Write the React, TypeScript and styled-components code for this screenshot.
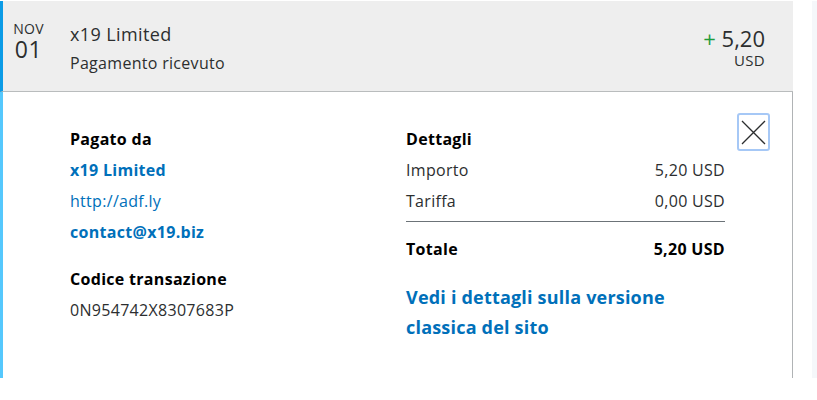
import React from "react";
import styled, { createGlobalStyle } from "styled-components";

const Global = createGlobalStyle`
  html, body { margin: 0; padding: 0; background: #ffffff; }
  body { font-family: "Open Sans", "Noto Sans", Arial, sans-serif; color: #2c2e2f; }
`;

const Page = styled.div`
  display: flex;
  width: 817px;
  padding-top: 1px;
`;

const Card = styled.div`
  width: 793px;
  flex: none;
  display: flex;
  flex-direction: column;
`;

const Strip = styled.div`
  margin-left: 19px;
  flex: 1;
  height: 377px;
  background: #f5f7fa;
`;

const Header = styled.div`
  height: 91px;
  box-sizing: border-box;
  background: #eeeeee;
  border-left: 3px solid #0b9be6;
  border-bottom: 1px solid #b9bcbd;
  display: flex;
  align-items: flex-start;
  padding: 19px 28px 0 0;
`;

const DateCol = styled.div`
  width: 51px;
  display: flex;
  flex-direction: column;
  align-items: center;
`;

const Month = styled.div`
  font-size: 14px;
  line-height: 18px;
  letter-spacing: 0.3px;
`;

const Day = styled.div`
  font-size: 23px;
  line-height: 24px;
  letter-spacing: 0.5px;
  margin-top: -1px;
`;

const Info = styled.div`
  margin-left: 16px;
  flex: 1;
  padding-top: 2px;
`;

const Title = styled.div`
  font-size: 18px;
  line-height: 24px;
  letter-spacing: 0.4px;
`;

const Sub = styled.div`
  font-size: 16px;
  line-height: 20px;
  letter-spacing: 0.3px;
  margin-top: 7px;
`;

const Amount = styled.div`
  text-align: right;
  padding-top: 5px;
`;

const Value = styled.div`
  font-size: 22px;
  line-height: 26px;
`;

const Plus = styled.span`
  color: #1f9c3b;
`;

const Currency = styled.div`
  font-size: 15px;
  line-height: 18px;
  letter-spacing: 0.3px;
`;

const Panel = styled.div`
  height: 286px;
  box-sizing: border-box;
  border-left: 3px solid #55c8fd;
  border-right: 1px solid #b0b3b5;
  display: flex;
  padding: 32px 22px 0 67px;
`;

const LeftCol = styled.div`
  width: 336px;
  flex: none;
`;

const RightCol = styled.div`
  width: 319px;
  flex: none;
`;

const Label = styled.div<{ $gap?: number }>`
  font-size: 16px;
  line-height: 31px;
  letter-spacing: 0.3px;
  font-weight: 700;
  color: #000000;
  margin-top: ${(p) => p.$gap ?? 0}px;
`;

const Link = styled.div<{ $bold?: boolean }>`
  font-size: 16px;
  line-height: 31px;
  letter-spacing: 0.3px;
  color: #0070ba;
  font-weight: ${(p) => (p.$bold ? 700 : 400)};
`;

const Plain = styled.div`
  font-size: 16px;
  line-height: 31px;
  letter-spacing: 0.3px;
`;

const Row = styled.div<{ $bold?: boolean; $rule?: boolean }>`
  display: flex;
  justify-content: space-between;
  font-size: 16px;
  line-height: 31px;
  letter-spacing: 0.3px;
  font-weight: ${(p) => (p.$bold ? 700 : 400)};
  color: ${(p) => (p.$bold ? "#000000" : "#2c2e2f")};
  padding-bottom: ${(p) => (p.$rule ? 4 : 0)}px;
  border-bottom: ${(p) => (p.$rule ? "1px solid #6c7378" : "none")};
`;

const TotalRow = styled(Row)`
  margin-top: 12px;
`;

const BigLink = styled.div`
  margin-top: 17px;
  font-size: 18px;
  line-height: 30px;
  letter-spacing: 0.2px;
  font-weight: 700;
  color: #0070ba;
  width: 300px;
`;

const Close = styled.button`
  margin-left: 12px;
  margin-top: -11px;
  width: 33px;
  height: 38px;
  flex: none;
  padding: 0;
  background: #ffffff;
  border: 2px solid #a6c8f6;
  border-radius: 3px;
  display: flex;
  align-items: center;
  justify-content: center;
`;

export default function App() {
  return (
    <>
      <Global />
      <Page>
        <Card>
          <Header>
            <DateCol>
              <Month>NOV</Month>
              <Day>01</Day>
            </DateCol>
            <Info>
              <Title>x19 Limited</Title>
              <Sub>Pagamento ricevuto</Sub>
            </Info>
            <Amount>
              <Value>
                <Plus>+</Plus> 5,20
              </Value>
              <Currency>USD</Currency>
            </Amount>
          </Header>
          <Panel>
            <LeftCol>
              <Label>Pagato da</Label>
              <Link $bold>x19 Limited</Link>
              <Link>http://adf.ly</Link>
              <Link $bold>contact@x19.biz</Link>
              <Label $gap={16}>Codice transazione</Label>
              <Plain>0N954742X8307683P</Plain>
            </LeftCol>
            <RightCol>
              <Label>Dettagli</Label>
              <Row>
                <span>Importo</span>
                <span>5,20 USD</span>
              </Row>
              <Row $rule>
                <span>Tariffa</span>
                <span>0,00 USD</span>
              </Row>
              <TotalRow $bold>
                <span>Totale</span>
                <span>5,20 USD</span>
              </TotalRow>
              <BigLink>Vedi i dettagli sulla versione classica del sito</BigLink>
            </RightCol>
            <Close aria-label="Chiudi">
              <svg width="27" height="27" viewBox="0 0 27 27">
                <path d="M2 2 L25 25 M25 2 L2 25" stroke="#2c2e2f" strokeWidth="1.3" fill="none" />
              </svg>
            </Close>
          </Panel>
        </Card>
        <Strip />
      </Page>
    </>
  );
}
